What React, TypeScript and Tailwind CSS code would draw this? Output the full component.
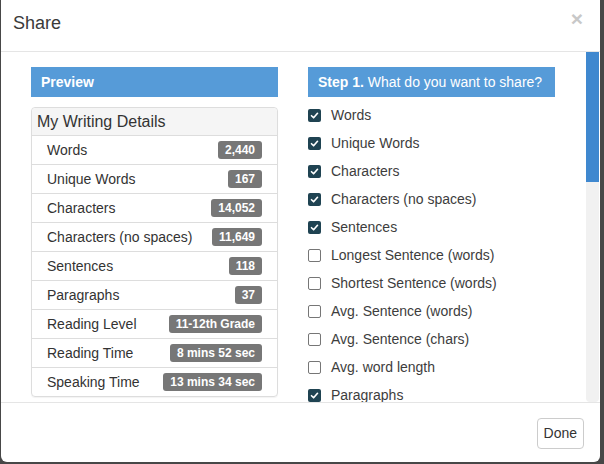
const details: [string, string][] = [
  ["Words", "2,440"],
  ["Unique Words", "167"],
  ["Characters", "14,052"],
  ["Characters (no spaces)", "11,649"],
  ["Sentences", "118"],
  ["Paragraphs", "37"],
  ["Reading Level", "11-12th Grade"],
  ["Reading Time", "8 mins 52 sec"],
  ["Speaking Time", "13 mins 34 sec"],
];

// the rest of the list sits below the fold of the scroll area
const options: [string, boolean][] = [
  ["Words", true],
  ["Unique Words", true],
  ["Characters", true],
  ["Characters (no spaces)", true],
  ["Sentences", true],
  ["Longest Sentence (words)", false],
  ["Shortest Sentence (words)", false],
  ["Avg. Sentence (words)", false],
  ["Avg. Sentence (chars)", false],
  ["Avg. word length", false],
  ["Paragraphs", true],
];

function Checkbox({ checked }: { checked: boolean }) {
  if (checked) {
    return (
      <span className="flex h-[13px] w-[13px] shrink-0 items-center justify-center rounded-[2px] bg-[#1f4352]">
        <svg viewBox="0 0 12 12" className="h-[9px] w-[9px]">
          <path d="M2 6.3 4.8 9 10 3" fill="none" stroke="white" strokeWidth="2.2" strokeLinecap="round" strokeLinejoin="round" />
        </svg>
      </span>
    );
  }
  return <span className="h-[13px] w-[13px] shrink-0 rounded-[2px] border border-[#767676] bg-white" />;
}

export default function App() {
  return (
    <div className="h-[464px] w-[604px] overflow-hidden bg-[#474747] font-['Liberation_Sans',Arial,sans-serif] text-[#333]">
      <div className="ml-px flex h-[462px] w-[599px] flex-col overflow-hidden rounded-b-[6px] bg-white">
        {/* header */}
        <div className="flex h-[52px] shrink-0 items-start justify-between border-b border-[#e5e5e5] pl-[12px] pr-[17px] pt-[11px]">
          <h4 className="text-[18px] leading-[24px] text-[#3a3a3a]">Share</h4>
          <span className="mt-[-4px] text-[21px] font-bold leading-[24px] text-[#c8c8c8]">×</span>
        </div>

        {/* body */}
        <div className="flex h-[350px] shrink-0">
          <div className="flex w-[585px] gap-[30px] overflow-hidden pl-[30px] pt-[15px]">
            <div className="w-[247px] shrink-0">
              <div className="flex h-[30px] items-center bg-[#569bd8] px-[10px] text-[14px] font-bold text-white">
                Preview
              </div>
              <div className="mt-[10px] rounded-[4px] border border-[#ddd] shadow-[0_1px_1px_rgba(0,0,0,0.05)]">
                <div className="flex h-[27px] items-center rounded-t-[4px] bg-[#f5f5f5] px-[5px] text-[16px] text-[#333]">
                  My Writing Details
                </div>
                {details.map(([label, value]) => (
                  <div
                    key={label}
                    className="flex h-[29px] items-center justify-between border-t border-[#ddd] px-[15px] text-[14px]"
                  >
                    <span>{label}</span>
                    <span className="rounded-[3px] bg-[#777] px-[7px] py-[3px] text-[12px] font-bold leading-[12px] text-white">
                      {value}
                    </span>
                  </div>
                ))}
              </div>
            </div>

            <div className="w-[247px] shrink-0">
              <div className="flex h-[30px] items-center bg-[#569bd8] px-[10px] text-[14px] text-white">
                <b>Step 1.</b>&nbsp;What do you want to share?
              </div>
              <div className="mt-[4px] flex flex-col">
                {options.map(([label, checked]) => (
                  <label key={label} className="flex h-[28px] items-center gap-[10px] text-[14px] text-[#3d3d3d]">
                    <Checkbox checked={checked} />
                    <span>{label}</span>
                  </label>
                ))}
              </div>
            </div>
          </div>
          <div className="flex w-[13px] shrink-0 flex-col">
            <div className="h-[130px] bg-[#3f88cf]" />
            <div className="flex-1 rounded-b-[4px] bg-[#f1f1f1]" />
          </div>
        </div>

        {/* footer */}
        <div className="flex flex-1 items-start justify-end border-t border-[#e5e5e5] pr-[16px] pt-[15px]">
          <button className="h-[31px] rounded-[4px] border border-[#ccc] bg-white px-[6px] text-[14px] text-[#333]">
            Done
          </button>
        </div>
      </div>
    </div>
  );
}
